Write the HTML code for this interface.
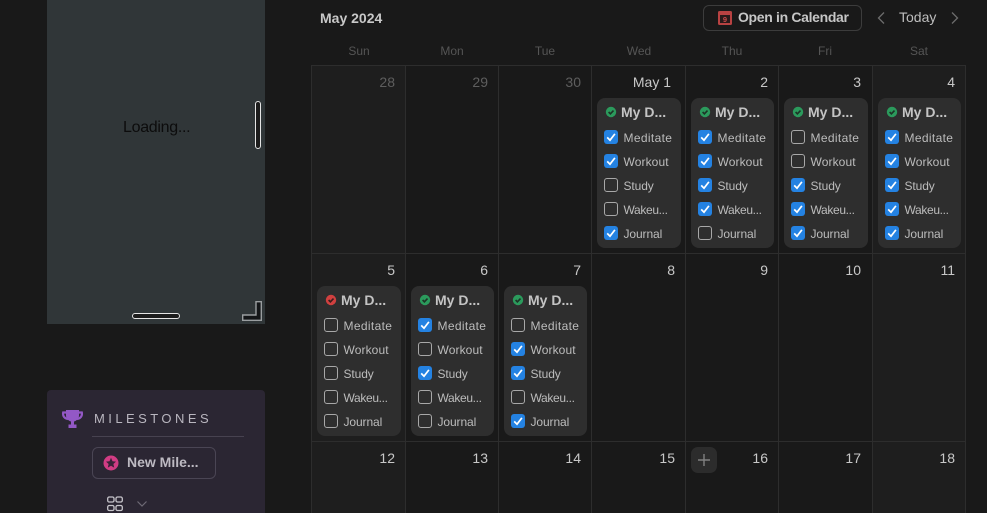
<!DOCTYPE html>
<html><head><meta charset="utf-8">
<style>
html,body{margin:0;padding:0;width:987px;height:513px;overflow:hidden;background:#191919;font-family:"Liberation Sans",sans-serif}
*{box-sizing:border-box}
.a{position:absolute}
.v{position:absolute;width:1px;top:65px;height:448px;background:#2d2d2d}
.h{position:absolute;height:1px;left:311px;width:655px;background:#2d2d2d}
.wd{position:absolute;top:44px;font-size:12px;line-height:14px;color:#555;width:60px;text-align:center}
.n{position:absolute;font-size:14px;line-height:16px;color:#c8c8c8;text-align:right;width:60px}
.n.m{color:#5e5e5e}
.c{position:absolute;width:84px;height:150px;background:#2e2e2e;border-radius:8px}
.c.s{width:83px}
.c svg.st{position:absolute;left:8px;top:8px}
.c b{position:absolute;left:24px;top:6px;font-size:14px;line-height:17px;color:#c4c4c4;white-space:nowrap}
.r{position:absolute;left:7px;width:14px;height:14px;border:1.5px solid #a8a8a8;border-radius:3px}
.r.k{background:#2482e2;border:0}
.r svg{position:absolute;left:0;top:0}
.l{position:absolute;left:26.5px;margin-top:1px;font-size:12px;line-height:14px;color:#bcbcbc;white-space:nowrap}
.l.t1{letter-spacing:.35px}.l.t2{letter-spacing:.1px}.l.t4{letter-spacing:-.35px}.l.t5{letter-spacing:-.1px}.l.t3{letter-spacing:-.1px}
.t1{top:32px}.t2{top:56px}.t3{top:80px}.t4{top:104px}.t5{top:128px}
</style></head><body>
<svg width="0" height="0" style="position:absolute"><defs>
<g id="ck"><path d="M3.2 7.4 L6 10.2 L10.9 3.9" fill="none" stroke="#fff" stroke-width="1.7"/></g>
<g id="ok"><circle cx="6" cy="6" r="5.2" fill="#2b9a5c"/><path d="M3.6 6 L5.4 7.8 L8.5 4.6" fill="none" stroke="#1d3327" stroke-width="1.6"/></g>
<g id="no"><circle cx="6" cy="6" r="5.2" fill="#d0403f"/><path d="M3.6 6 L5.4 7.8 L8.5 4.6" fill="none" stroke="#3a1c1c" stroke-width="1.6"/></g>
</defs></svg>

<!-- left panel -->
<div class="a" style="left:47px;top:0;width:218px;height:324px;background:#303638"></div>
<div class="a" style="left:123px;top:119px;font-size:16px;line-height:18px;letter-spacing:-.3px;color:#0c0c0c">Loading...</div>
<div class="a" style="left:255px;top:101px;width:6px;height:48px;background:#1c1c1c;border:1px solid #e4e4e4;border-radius:3px"></div>
<div class="a" style="left:132px;top:313px;width:48px;height:6px;background:#1c1c1c;border:1px solid #e4e4e4;border-radius:3px"></div>
<svg class="a" style="left:242px;top:301px" width="20" height="20"><path d="M.7 19.3 V14 H14 V.7 H19.3 V19.3 Z" fill="#141618" stroke="#9a9ea0" stroke-width="1.4"/></svg>

<div class="a" style="left:47px;top:390px;width:218px;height:123px;background:#2b2633;border-radius:4px 4px 0 0"></div>
<svg class="a" style="left:61px;top:409px" width="22" height="20" viewBox="0 0 22 20"><path d="M5 1 H18 V6.5 C18 10 15 12 13 12.5 V15.5 H15.5 V19 H7.5 V15.5 H10 V12.5 C8 12 5 10 5 6.5 Z" fill="#9358c6"/><path d="M5.5 3.5 H2.2 C1.5 7 3.5 9.5 7 10 M17.5 3.5 H20.8 C21.5 7 19.5 9.5 16 10" fill="none" stroke="#9358c6" stroke-width="2.2"/></svg>
<div class="a" style="left:94px;top:411px;font-size:13px;line-height:16px;letter-spacing:3.45px;color:#b9b6bf">MILESTONES</div>
<div class="a" style="left:92px;top:436px;width:152px;height:1px;background:#474250"></div>
<div class="a" style="left:92px;top:447px;width:124px;height:32px;border:1px solid #4a4554;border-radius:6px"></div>
<svg class="a" style="left:103px;top:455px" width="16" height="16" viewBox="0 0 16 16"><circle cx="8" cy="8" r="7.5" fill="#d23c84"/><path d="M8 2.8 L9.5 6.2 L13 6.6 L10.4 9 L11.2 12.6 L8 10.7 L4.8 12.6 L5.6 9 L3 6.6 L6.5 6.2 Z" fill="#3a2238"/></svg>
<div class="a" style="left:127px;top:454px;font-size:14px;line-height:17px;font-weight:bold;color:#bdbac2">New Mile...</div>
<svg class="a" style="left:107px;top:496px" width="16" height="16" fill="none" stroke="#c6c4ca" stroke-width="1.3"><rect x=".7" y="1" width="6.3" height="5" rx="1.5"/><rect x="9" y="1" width="6.3" height="5" rx="1.5"/><rect x=".7" y="9.5" width="6.3" height="5" rx="1.5"/><rect x="9" y="9.5" width="6.3" height="5" rx="1.5"/></svg>
<svg class="a" style="left:136px;top:500px" width="12" height="8" fill="none" stroke="#6e6a75" stroke-width="1.2"><path d="M1.5 1.5 L6 6 L10.5 1.5"/></svg>

<!-- calendar header -->
<div class="a" style="left:320px;top:10px;font-size:14px;line-height:17px;font-weight:bold;color:#c8c8c8">May 2024</div>
<div class="a" style="left:703px;top:5px;width:159px;height:26px;border:1px solid #3c3c3c;border-radius:6px"></div>
<svg class="a" style="left:718px;top:11px" width="14" height="14" viewBox="0 0 14 14"><rect width="14" height="14" rx="1.5" fill="#b84242"/><rect x="2" y="4" width="10" height="8" fill="#2a1a1a"/><text x="7" y="11" font-size="7.5" font-weight="bold" text-anchor="middle" fill="#c84a4a" font-family="Liberation Sans">9</text></svg>
<div class="a" style="left:738px;top:9px;font-size:14px;line-height:17px;font-weight:bold;letter-spacing:-.33px;color:#c6c6c6">Open in Calendar</div>
<svg class="a" style="left:876px;top:11px" width="11" height="14" fill="none" stroke="#6c6c6c" stroke-width="1.3"><path d="M8 1.5 L2.5 7 L8 12.5"/></svg>
<div class="a" style="left:899px;top:9px;font-size:14px;line-height:17px;color:#bebebe">Today</div>
<svg class="a" style="left:949px;top:11px" width="11" height="14" fill="none" stroke="#6c6c6c" stroke-width="1.3"><path d="M3 1.5 L8.5 7 L3 12.5"/></svg>

<div class="wd" style="left:329px">Sun</div>
<div class="wd" style="left:422px">Mon</div>
<div class="wd" style="left:515px">Tue</div>
<div class="wd" style="left:609px">Wed</div>
<div class="wd" style="left:702px">Thu</div>
<div class="wd" style="left:795px">Fri</div>
<div class="wd" style="left:889px">Sat</div>

<!-- weekend shading -->
<div class="a" style="left:311px;top:65px;width:94px;height:448px;background:#1e1e1e;border-top-left-radius:4px"></div>
<div class="a" style="left:872px;top:65px;width:93px;height:448px;background:#1e1e1e"></div>

<div class="v" style="left:311px"></div><div class="v" style="left:405px"></div><div class="v" style="left:498px"></div><div class="v" style="left:591px"></div><div class="v" style="left:685px"></div><div class="v" style="left:778px"></div><div class="v" style="left:872px"></div><div class="v" style="left:965px"></div>
<div class="h" style="top:65px"></div><div class="h" style="top:253px"></div><div class="h" style="top:441px"></div>

<!-- numbers -->
<div class="n m" style="left:335px;top:74px">28</div>
<div class="n m" style="left:428px;top:74px">29</div>
<div class="n m" style="left:521px;top:74px">30</div>
<div class="n" style="left:611px;top:74px">May 1</div>
<div class="n" style="left:708px;top:74px">2</div>
<div class="n" style="left:801px;top:74px">3</div>
<div class="n" style="left:895px;top:74px">4</div>
<div class="n" style="left:335px;top:262px">5</div>
<div class="n" style="left:428px;top:262px">6</div>
<div class="n" style="left:521px;top:262px">7</div>
<div class="n" style="left:615px;top:262px">8</div>
<div class="n" style="left:708px;top:262px">9</div>
<div class="n" style="left:801px;top:262px">10</div>
<div class="n" style="left:895px;top:262px">11</div>
<div class="n" style="left:335px;top:450px">12</div>
<div class="n" style="left:428px;top:450px">13</div>
<div class="n" style="left:521px;top:450px">14</div>
<div class="n" style="left:615px;top:450px">15</div>
<div class="n" style="left:708px;top:450px">16</div>
<div class="n" style="left:801px;top:450px">17</div>
<div class="n" style="left:895px;top:450px">18</div>

<div class="a" style="left:691px;top:447px;width:26px;height:26px;background:#2c2c2c;border-radius:7px"></div>
<svg class="a" style="left:697px;top:453px" width="14" height="14" stroke="#808080" stroke-width="1.4"><path d="M7 1 V13 M1 7 H13"/></svg>

<!-- row 1 -->
<div class="c" style="left:597px;top:98px"><svg class="st" width="12" height="12"><use href="#ok"/></svg><b>My D...</b>
<div class="r k t1"><svg width="14" height="14"><use href="#ck"/></svg></div><div class="l t1">Meditate</div>
<div class="r k t2"><svg width="14" height="14"><use href="#ck"/></svg></div><div class="l t2">Workout</div>
<div class="r t3"></div><div class="l t3">Study</div>
<div class="r t4"></div><div class="l t4">Wakeu...</div>
<div class="r k t5"><svg width="14" height="14"><use href="#ck"/></svg></div><div class="l t5">Journal</div></div>

<div class="c s" style="left:691px;top:98px"><svg class="st" width="12" height="12"><use href="#ok"/></svg><b>My D...</b>
<div class="r k t1"><svg width="14" height="14"><use href="#ck"/></svg></div><div class="l t1">Meditate</div>
<div class="r k t2"><svg width="14" height="14"><use href="#ck"/></svg></div><div class="l t2">Workout</div>
<div class="r k t3"><svg width="14" height="14"><use href="#ck"/></svg></div><div class="l t3">Study</div>
<div class="r k t4"><svg width="14" height="14"><use href="#ck"/></svg></div><div class="l t4">Wakeu...</div>
<div class="r t5"></div><div class="l t5">Journal</div></div>

<div class="c" style="left:784px;top:98px"><svg class="st" width="12" height="12"><use href="#ok"/></svg><b>My D...</b>
<div class="r t1"></div><div class="l t1">Meditate</div>
<div class="r t2"></div><div class="l t2">Workout</div>
<div class="r k t3"><svg width="14" height="14"><use href="#ck"/></svg></div><div class="l t3">Study</div>
<div class="r k t4"><svg width="14" height="14"><use href="#ck"/></svg></div><div class="l t4">Wakeu...</div>
<div class="r k t5"><svg width="14" height="14"><use href="#ck"/></svg></div><div class="l t5">Journal</div></div>

<div class="c s" style="left:878px;top:98px"><svg class="st" width="12" height="12"><use href="#ok"/></svg><b>My D...</b>
<div class="r k t1"><svg width="14" height="14"><use href="#ck"/></svg></div><div class="l t1">Meditate</div>
<div class="r k t2"><svg width="14" height="14"><use href="#ck"/></svg></div><div class="l t2">Workout</div>
<div class="r k t3"><svg width="14" height="14"><use href="#ck"/></svg></div><div class="l t3">Study</div>
<div class="r k t4"><svg width="14" height="14"><use href="#ck"/></svg></div><div class="l t4">Wakeu...</div>
<div class="r k t5"><svg width="14" height="14"><use href="#ck"/></svg></div><div class="l t5">Journal</div></div>

<!-- row 2 -->
<div class="c" style="left:317px;top:286px"><svg class="st" width="12" height="12"><use href="#no"/></svg><b>My D...</b>
<div class="r t1"></div><div class="l t1">Meditate</div>
<div class="r t2"></div><div class="l t2">Workout</div>
<div class="r t3"></div><div class="l t3">Study</div>
<div class="r t4"></div><div class="l t4">Wakeu...</div>
<div class="r t5"></div><div class="l t5">Journal</div></div>

<div class="c s" style="left:411px;top:286px"><svg class="st" width="12" height="12"><use href="#ok"/></svg><b>My D...</b>
<div class="r k t1"><svg width="14" height="14"><use href="#ck"/></svg></div><div class="l t1">Meditate</div>
<div class="r t2"></div><div class="l t2">Workout</div>
<div class="r k t3"><svg width="14" height="14"><use href="#ck"/></svg></div><div class="l t3">Study</div>
<div class="r t4"></div><div class="l t4">Wakeu...</div>
<div class="r t5"></div><div class="l t5">Journal</div></div>

<div class="c s" style="left:504px;top:286px"><svg class="st" width="12" height="12"><use href="#ok"/></svg><b>My D...</b>
<div class="r t1"></div><div class="l t1">Meditate</div>
<div class="r k t2"><svg width="14" height="14"><use href="#ck"/></svg></div><div class="l t2">Workout</div>
<div class="r k t3"><svg width="14" height="14"><use href="#ck"/></svg></div><div class="l t3">Study</div>
<div class="r t4"></div><div class="l t4">Wakeu...</div>
<div class="r k t5"><svg width="14" height="14"><use href="#ck"/></svg></div><div class="l t5">Journal</div></div>
</body></html>
